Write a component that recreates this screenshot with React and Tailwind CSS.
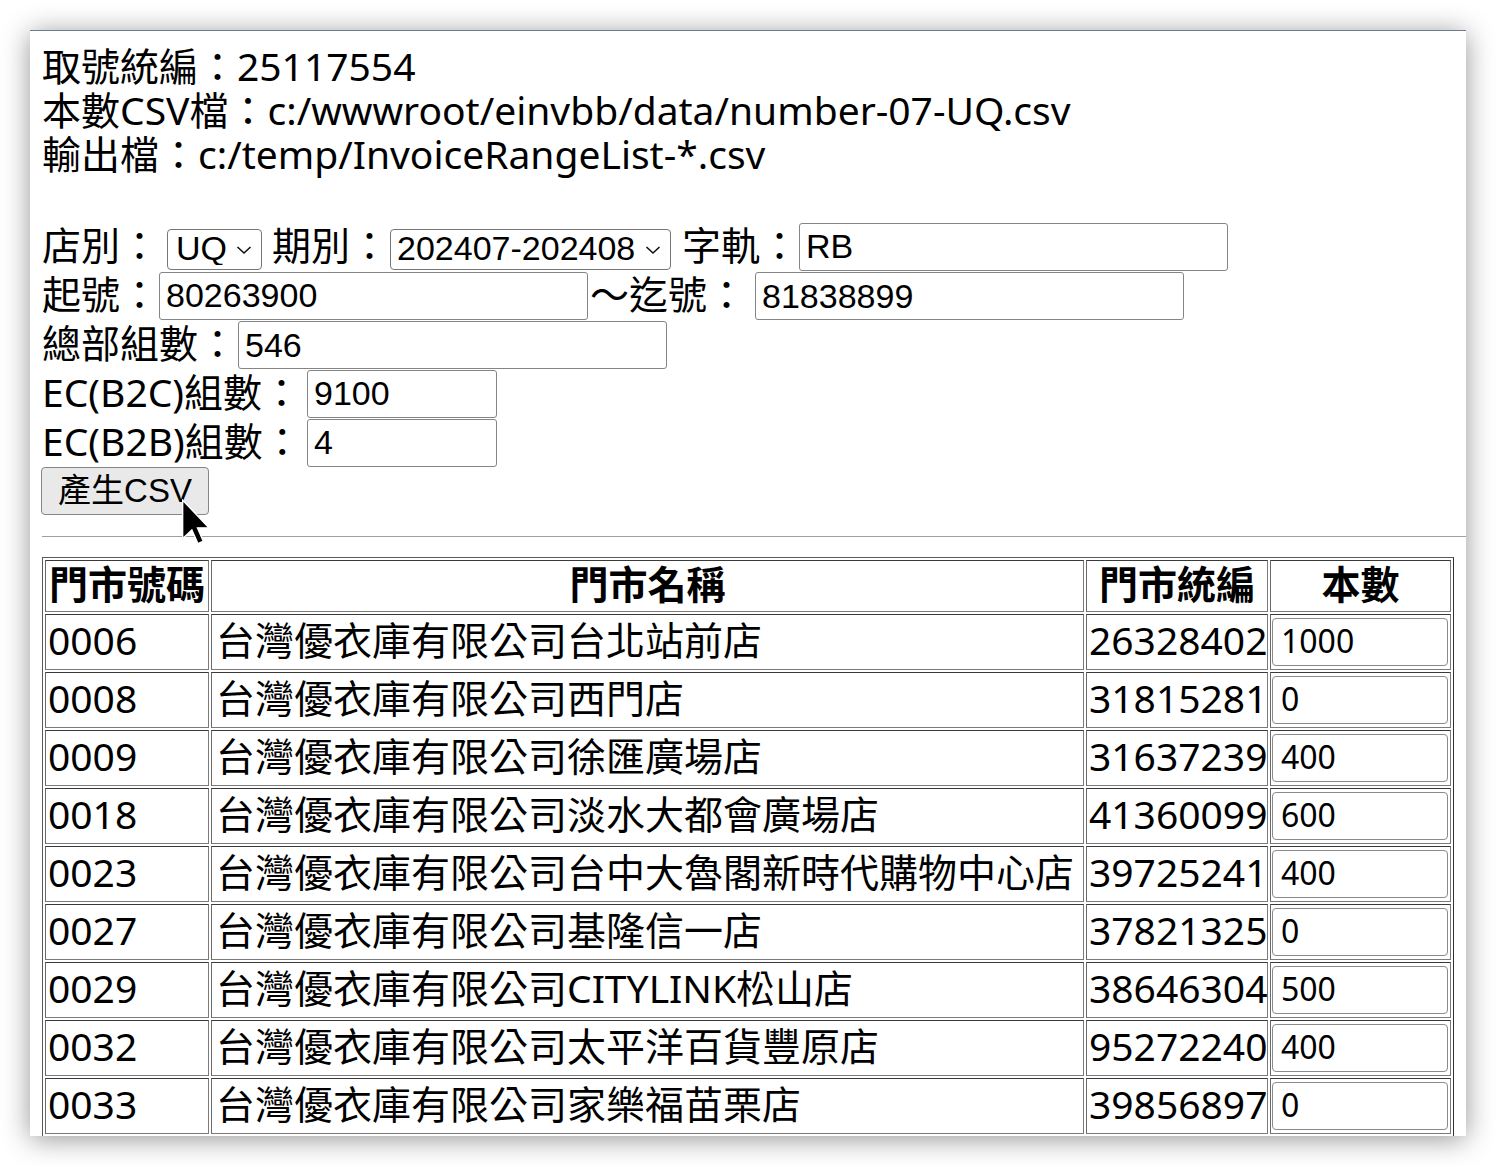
import React from "react";

const rows = [
  ["0006", "台灣優衣庫有限公司台北站前店", "26328402", "1000"],
  ["0008", "台灣優衣庫有限公司西門店", "31815281", "0"],
  ["0009", "台灣優衣庫有限公司徐匯廣場店", "31637239", "400"],
  ["0018", "台灣優衣庫有限公司淡水大都會廣場店", "41360099", "600"],
  ["0023", "台灣優衣庫有限公司台中大魯閣新時代購物中心店", "39725241", "400"],
  ["0027", "台灣優衣庫有限公司基隆信一店", "37821325", "0"],
  ["0029", "台灣優衣庫有限公司CITYLINK松山店", "38646304", "500"],
  ["0032", "台灣優衣庫有限公司太平洋百貨豐原店", "95272240", "400"],
  ["0033", "台灣優衣庫有限公司家樂福苗栗店", "39856897", "0"],
];

function Chevron() {
  return (
    <svg width="16" height="10" viewBox="0 0 16 10" className="pointer-events-none absolute right-[10px] top-1/2 -translate-y-1/2">
      <path d="M1.5 2 L8 8 L14.5 2" fill="none" stroke="#111" strokeWidth="1.6" />
    </svg>
  );
}

function Select({ value, width, pl }) {
  return (
    <span className="relative inline-flex">
      <select
        defaultValue={value}
        className={`appearance-none ${width} h-[41px] rounded-[4px] border border-[#767676] bg-white ${pl} pb-[3px] text-[34px] leading-[34px] text-black font-['Liberation_Sans',sans-serif] outline-none`}
      >
        <option value={value}>{value}</option>
      </select>
      <Chevron />
    </span>
  );
}

function TextInput({ value, width }) {
  return (
    <input
      defaultValue={value}
      className={`${width} h-[48px] rounded-[3px] border border-[#858585] bg-white px-[6px] text-[34px] text-black font-['Liberation_Sans',sans-serif] outline-none`}
    />
  );
}

const cellBase = "border border-t-[#3a3a3a] border-l-[#6a6a6a] border-r-[#7a7a7a] border-b-[#7a7a7a] align-middle";

export default function App() {
  return (
    <div className="w-[1496px] min-h-[1166px] bg-white p-[30px]">
      <div className="relative w-[1436px] h-[1106px] overflow-hidden bg-white border-t border-[#6f7b8f] shadow-[0_3px_26px_rgba(0,0,0,0.42)] text-black font-['Noto_Sans','Noto_Sans_CJK_TC',sans-serif]">
        <div className="pt-[13px] pl-[12px] text-[39px] leading-[44px]">
          <div>取號統編：25117554</div>
          <div>本數CSV檔：c:/wwwroot/einvbb/data/number-07-UQ.csv</div>
          <div>輸出檔：c:/temp/InvoiceRangeList-*.csv</div>
          <div className="h-[46px]" />

          <div className="flex h-[49px] items-center whitespace-nowrap">
            <span className="pb-[4px]">店別：</span>
            <span className="ml-[8px]"><Select value="UQ" width="w-[95px]" pl="pl-[8px]" /></span>
            <span className="ml-[10px] pb-[4px]">期別：</span>
            <span className="ml-[1px]"><Select value="202407-202408" width="w-[281px]" pl="pl-[6px]" /></span>
            <span className="ml-[11px] pb-[4px]">字軌：</span>
            <TextInput value="RB" width="w-[429px]" />
          </div>

          <div className="flex h-[49px] items-center whitespace-nowrap">
            <span className="pb-[4px]">起號：</span>
            <TextInput value="80263900" width="w-[429px]" />
            <span className="ml-[2px] pb-[4px]">～迄號：</span>
            <span className="ml-[9px]"><TextInput value="81838899" width="w-[429px]" /></span>
          </div>

          <div className="flex h-[49px] items-center whitespace-nowrap">
            <span className="pb-[4px]">總部組數：</span>
            <span className="ml-[1px]"><TextInput value="546" width="w-[429px]" /></span>
          </div>

          <div className="flex h-[49px] items-center whitespace-nowrap">
            <span className="w-[265px] pb-[4px]">EC(B2C)組數：</span>
            <TextInput value="9100" width="w-[190px]" />
          </div>

          <div className="flex h-[49px] items-center whitespace-nowrap">
            <span className="w-[265px] pb-[4px]">EC(B2B)組數：</span>
            <TextInput value="4" width="w-[190px]" />
          </div>

          <div className="flex h-[48px] items-center">
            <button className="-ml-[1px] h-[48px] w-[168px] rounded-[4px] border border-[#858585] bg-[#e9e9e9] text-[33px] leading-[40px] text-black font-['Liberation_Sans','Noto_Sans_CJK_TC',sans-serif]">
              產生CSV
            </button>
          </div>
        </div>

        <div className="ml-[12px] mt-[21px] h-px bg-[#a0a0a0]" />

        <div className="pl-[12px] pt-[20px]">
          <table className="table-fixed w-[1412px] border-separate border-spacing-[2px] border border-t-[#5a5a5a] border-l-[#5a5a5a] border-r-[#303030] border-b-[#303030] text-[39px] leading-[44px]">
            <thead>
              <tr>
                <th className={`${cellBase} w-[164px] px-[2px] pt-[1px] pb-[5px] text-center font-bold`}>門市號碼</th>
                <th className={`${cellBase} w-[873px] px-[2px] pt-[1px] pb-[5px] text-center font-bold`}>門市名稱</th>
                <th className={`${cellBase} w-[182px] px-[2px] pt-[1px] pb-[5px] text-center font-bold`}>門市統編</th>
                <th className={`${cellBase} w-[181px] px-[2px] pt-[1px] pb-[5px] text-center font-bold`}>本數</th>
              </tr>
            </thead>
            <tbody>
              {rows.map((r) => (
                <tr key={r[0]}>
                  <td className={`${cellBase} h-[56px] px-[2px] pt-[0px] pb-[4px] whitespace-nowrap`}>{r[0]}</td>
                  <td className={`${cellBase} h-[56px] px-[4px] pt-[0px] pb-[4px] whitespace-nowrap`}>{r[1]}</td>
                  <td className={`${cellBase} h-[56px] px-[2px] pt-[0px] pb-[4px] whitespace-nowrap`}>{r[2]}</td>
                  <td className={`${cellBase} h-[56px] px-[1px] py-[3px]`}>
                    <input
                      defaultValue={r[3]}
                      className="block h-[48px] w-[176px] rounded-[4px] border border-[#8a8a8a] bg-white px-[8px] pb-[4px] text-[32px] text-black font-['Noto_Sans',sans-serif] outline-none"
                    />
                  </td>
                </tr>
              ))}
            </tbody>
          </table>
        </div>

        <svg
          width="30"
          height="46"
          viewBox="0 0 12 19"
          className="absolute left-[151px] top-[468px]"
        >
          <path
            d="M0.5 0.5 L0.5 16.3 L4.3 12.8 L6.8 18.4 L9 17.4 L6.6 11.9 L11.3 11.9 Z"
            fill="#000"
            stroke="#fff"
            strokeWidth="0.55"
            strokeLinejoin="miter"
          />
        </svg>
      </div>
    </div>
  );
}
